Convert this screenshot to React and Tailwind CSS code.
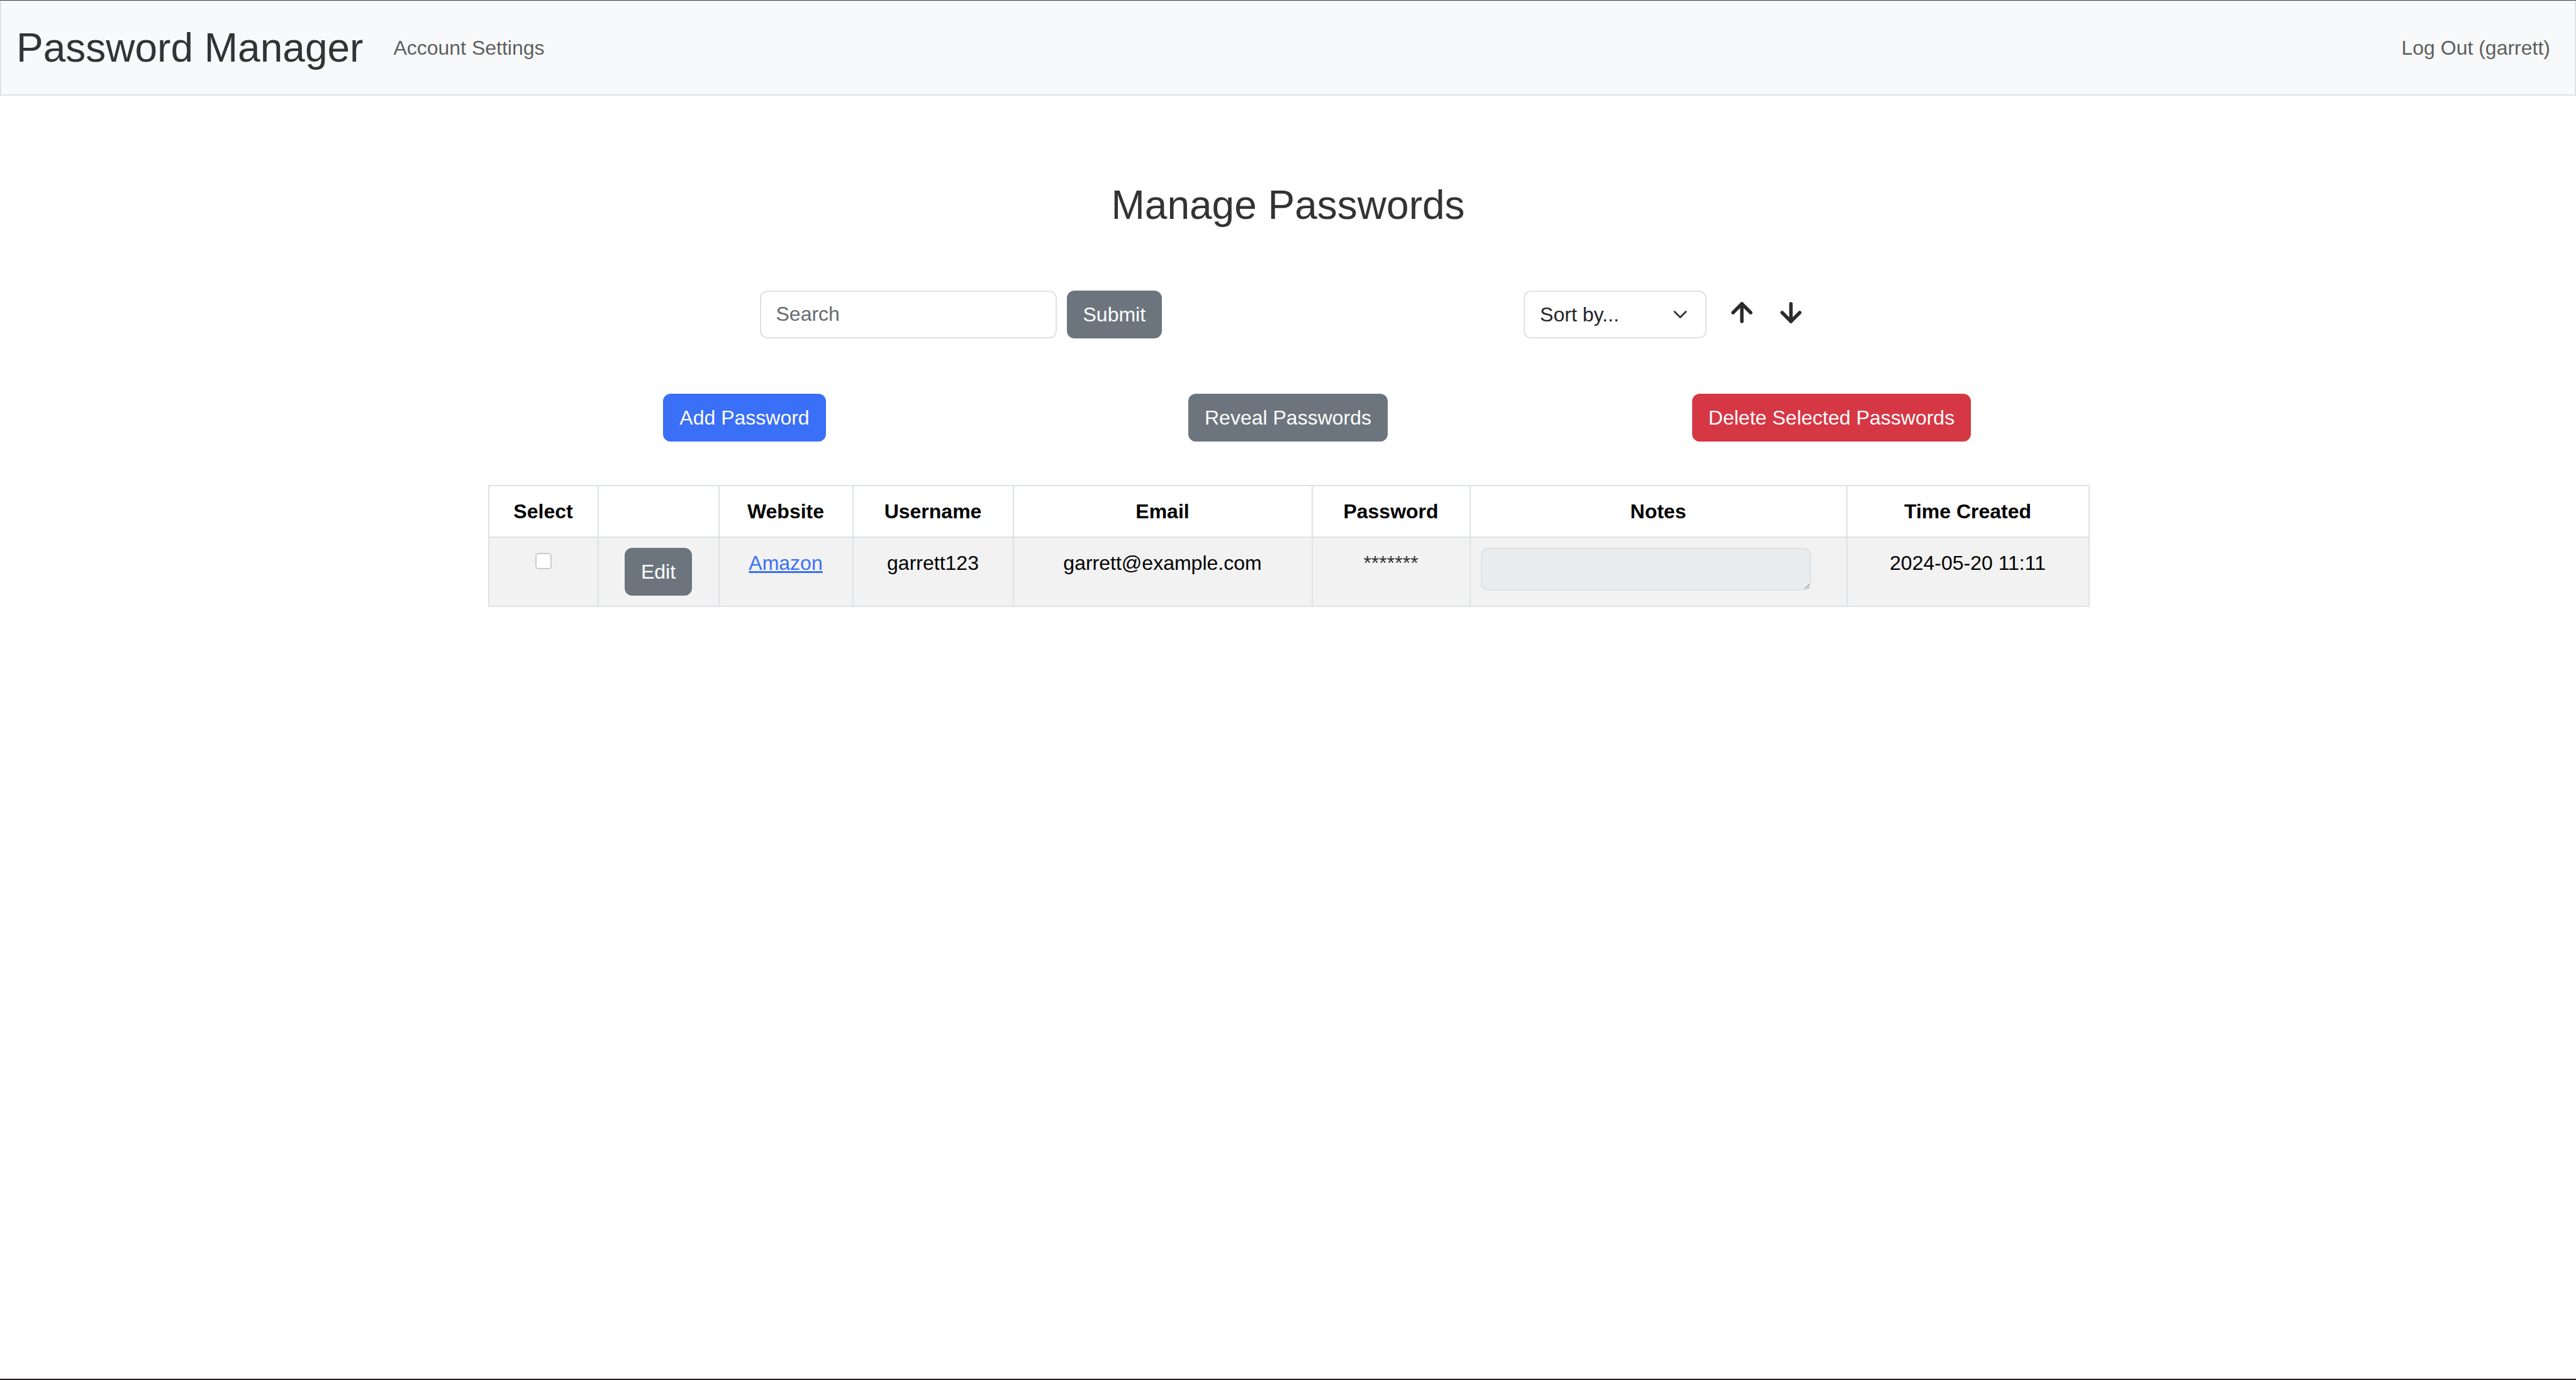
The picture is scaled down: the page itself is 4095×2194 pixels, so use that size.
import React from "react";
import { ArrowDown, ArrowUp } from "lucide-react";

const columns = [
  { label: "Select", width: 174 },
  { label: "", width: 192 },
  { label: "Website", width: 213 },
  { label: "Username", width: 255 },
  { label: "Email", width: 475 },
  { label: "Password", width: 251 },
  { label: "Notes", width: 599 },
  { label: "Time Created", width: 385 },
];

const entries = [
  {
    website: "Amazon",
    username: "garrett123",
    email: "garrett@example.com",
    password: "*******",
    notes: "",
    created: "2024-05-20 11:11",
  },
];

function Navbar() {
  return (
    <>
      <div className="h-px bg-[#4b4b4b]" />
      <nav className="flex items-center border-x-2 border-b-2 border-t border-[#dee2e6] bg-[#f8f9fa] py-[16px] pl-[24px] pr-[23px]">
        <a className="mr-[32px] py-[10px] text-[64px] leading-[96px] text-[#333]">Password Manager</a>
        <a className="px-[16px] py-[16px] text-[32px] leading-[48px] text-black/65">Account Settings</a>
        <a className="ml-auto px-[16px] py-[16px] text-[32px] leading-[48px] text-black/65">Log Out (garrett)</a>
      </nav>
    </>
  );
}

function Toolbar() {
  return (
    <div className="mt-[97px] flex items-center pl-[456px]">
      <input
        placeholder="Search"
        className="h-[76px] w-[472px] rounded-[12px] border-2 border-[#dee2e6] bg-white px-[24px] text-[32px] text-[#212529] outline-none placeholder:text-[#666a6e]"
      />
      <button className="ml-[16px] h-[76px] rounded-[12px] border-2 border-[#6c757d] bg-[#6c757d] px-[24px] text-[32px] leading-[48px] text-white">
        Submit
      </button>
      <div className="ml-[575px] flex h-[76px] w-[291px] items-center justify-between rounded-[12px] border-2 border-[#dee2e6] bg-white pl-[24px] pr-[24px] text-[32px] text-[#212529]">
        <span>Sort by...</span>
        <svg width="32" height="24" viewBox="0 0 16 16" preserveAspectRatio="xMidYMid meet" fill="none">
          <path d="m2 5 6 6 6-6" stroke="#343a40" strokeWidth="2" strokeLinecap="round" strokeLinejoin="round" />
        </svg>
      </div>
      <ArrowUp size={48} strokeWidth={2.75} className="mb-[6px] ml-[32px] text-[#2b2b2b]" />
      <ArrowDown size={48} strokeWidth={2.75} className="mb-[6px] ml-[30px] text-[#2b2b2b]" />
    </div>
  );
}

function Actions() {
  const btn = "rounded-[12px] border-2 px-[24px] py-[12px] text-[32px] leading-[48px] text-white";
  return (
    <div className="mt-[88px] grid grid-cols-3 justify-items-center">
      <button className={`${btn} border-[#3a6ff7] bg-[#3a6ff7]`}>Add Password</button>
      <button className={`${btn} border-[#6c757d] bg-[#6c757d]`}>Reveal Passwords</button>
      <button className={`${btn} border-[#d63745] bg-[#d63745]`}>Delete Selected Passwords</button>
    </div>
  );
}

function PasswordTable() {
  const cell = "border-2 border-[#dee2e6] p-[16px] text-center align-top";
  return (
    <div className="mt-[69px] px-[24px]">
      <table className="w-full table-fixed border-collapse text-[32px] leading-[48px] text-black">
        <colgroup>
          {columns.map((col, i) => (
            <col key={i} style={{ width: col.width }} />
          ))}
        </colgroup>
        <thead>
          <tr className="bg-white">
            {columns.map((col, i) => (
              <th key={i} className={`${cell} font-bold`}>
                {col.label}
              </th>
            ))}
          </tr>
        </thead>
        <tbody>
          {entries.map((entry) => (
            <tr key={entry.website} className="bg-[#f2f2f2]">
              <td className={cell}>
                <div className="mx-auto mt-[8px] h-[26px] w-[26px] rounded-[5px] border-2 border-[#cbcbcb] bg-white" />
              </td>
              <td className={cell}>
                <button className="rounded-[12px] border-2 border-[#6c757d] bg-[#6c757d] px-[24px] py-[12px] text-[32px] leading-[48px] text-white">
                  Edit
                </button>
              </td>
              <td className={cell}>
                <a className="text-[#3a6ff7] underline">{entry.website}</a>
              </td>
              <td className={cell}>{entry.username}</td>
              <td className={cell}>{entry.email}</td>
              <td className={`${cell} text-[#333]`}>{entry.password}</td>
              <td className={`${cell} text-left`}>
                <textarea
                  readOnly
                  value={entry.notes}
                  className="block h-[68px] w-[525px] rounded-[12px] border-2 border-[#dee2e6] bg-[#e9ecef] outline-none"
                />
              </td>
              <td className={cell}>{entry.created}</td>
            </tr>
          ))}
        </tbody>
      </table>
    </div>
  );
}

export default function App() {
  return (
    <div className="flex min-h-screen flex-col bg-white font-['Liberation_Sans',Arial,sans-serif]">
      <Navbar />
      <main className="mx-auto w-[2592px]">
        <h2 className="mt-[136px] text-center text-[64px] leading-[1.2] text-[#333]">Manage Passwords</h2>
        <Toolbar />
        <Actions />
        <PasswordTable />
      </main>
      <div className="mt-auto h-[2px] bg-[#231f20]" />
    </div>
  );
}
